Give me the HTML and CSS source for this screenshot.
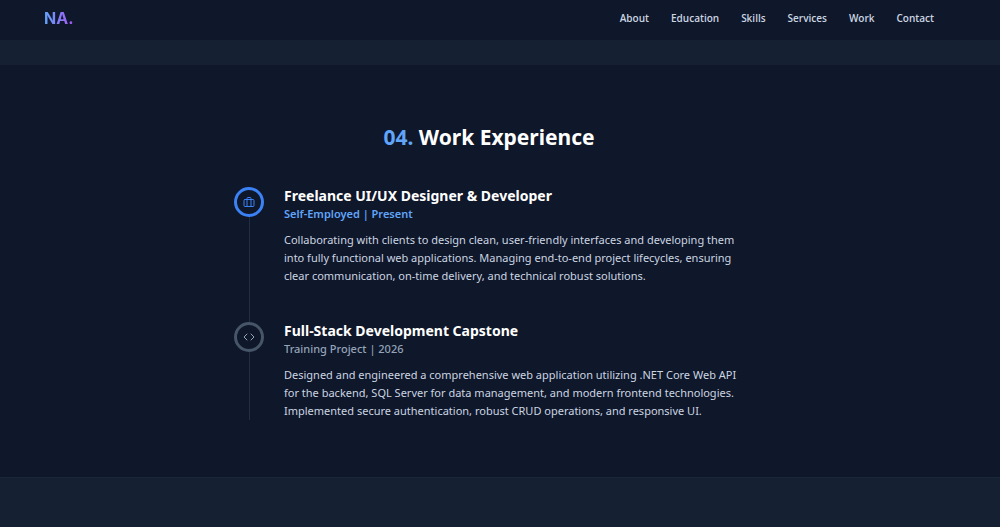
FILE: index.html
```html
<!DOCTYPE html>
<html lang="en">
<head>
<meta charset="utf-8">
<meta name="viewport" content="width=device-width, initial-scale=1">
<title>NA. Work Experience</title>
<link rel="stylesheet" href="styles.css">
</head>
<body>
<header class="header">
  <a class="logo" href="#">NA.</a>
  <nav class="nav">
    <a href="#about">About</a>
    <a href="#education">Education</a>
    <a href="#skills">Skills</a>
    <a href="#services">Services</a>
    <a href="#work">Work</a>
    <a href="#contact">Contact</a>
  </nav>
</header>
<main>
  <div class="band"></div>
  <section class="work" id="work">
    <h2 class="title"><span class="number">04.</span> Work Experience</h2>
    <div class="timeline">
      <article class="entry current">
        <div class="marker">
          <svg class="icon" viewBox="0 0 24 24" aria-hidden="true"><rect x="2" y="7" width="20" height="14" rx="2"/><path d="M16 21V5a2 2 0 0 0-2-2h-4a2 2 0 0 0-2 2v16"/></svg>
        </div>
        <div class="details">
          <h3 class="role">Freelance UI/UX Designer &amp; Developer</h3>
          <p class="meta">Self-Employed | Present</p>
          <p class="text">Collaborating with clients to design clean, user-friendly interfaces and developing them<br>into fully functional web applications. Managing end-to-end project lifecycles, ensuring<br>clear communication, on-time delivery, and technical robust solutions.</p>
        </div>
      </article>
      <article class="entry">
        <div class="marker">
          <svg class="icon" viewBox="0 0 24 24" aria-hidden="true"><path d="M16 18l6-6-6-6M8 6l-6 6 6 6"/></svg>
        </div>
        <div class="details">
          <h3 class="role">Full-Stack Development Capstone</h3>
          <p class="meta">Training Project | 2026</p>
          <p class="text">Designed and engineered a comprehensive web application utilizing .NET Core Web API<br>for the backend, SQL Server for data management, and modern frontend technologies.<br>Implemented secure authentication, robust CRUD operations, and responsive UI.</p>
        </div>
      </article>
    </div>
  </section>
</main>
</body>
</html>
```
FILE: styles.css
```css
* { box-sizing: border-box; }
body {
  margin: 0;
  min-height: 100vh;
  background: #152033;
  color: #fff;
  font-family: "Segoe UI", "Noto Sans", sans-serif;
}
h2, h3, p { margin: 0; }
.header {
  display: flex;
  align-items: center;
  justify-content: space-between;
  height: 40px;
  padding: 0 66px 4px 44px;
  background: #0f172a;
}
.logo {
  font: 700 16px/24px Inter, sans-serif;
  text-decoration: none;
  color: transparent;
  background: linear-gradient(90deg, #60a5fa, #a855f7);
  background-clip: text;
  -webkit-background-clip: text;
}
.nav { display: flex; gap: 22px; }
.nav a {
  color: #cbd5e1;
  font-family: "Segoe UI", "Open Sans", sans-serif;
  font-size: 10px;
  font-weight: 600;
  line-height: 16px;
  text-decoration: none;
}
.band { height: 25px; }
.work {
  padding: 56px 22px 57px 0;
  background: #0f172a;
  border-bottom: 1px solid #1b2639;
}
.title {
  margin-bottom: 34px;
  font-size: 21px;
  font-weight: 700;
  line-height: 32px;
  text-align: center;
}
.number { color: #60a5fa; }
.timeline {
  display: grid;
  gap: 37px;
  max-width: 510px;
  margin: 0 auto;
  background: linear-gradient(#232e41, #232e41) 15px 0 / 1px 100% no-repeat;
}
.entry { display: flex; gap: 20px; }
.marker {
  display: grid;
  place-items: center;
  flex: none;
  width: 30px;
  height: 30px;
  border: 3px solid #475569;
  border-radius: 50%;
  background: #0f172a;
  color: #94a3b8;
}
.current .marker { border-color: #3b82f6; color: #3b82f6; }
.icon {
  width: 12px;
  height: 12px;
  fill: none;
  stroke: currentColor;
  stroke-width: 2;
  stroke-linecap: round;
  stroke-linejoin: round;
}
.details { white-space: nowrap; }
.role { font-size: 14px; font-weight: 700; line-height: 18px; }
.meta {
  margin-bottom: 8px;
  color: #94a3b8;
  font-size: 11px;
  font-weight: 500;
  line-height: 18px;
}
.current .meta { color: #60a5fa; font-weight: 600; }
.text { color: #cbd5e1; font-size: 11px; line-height: 18px; }
```
